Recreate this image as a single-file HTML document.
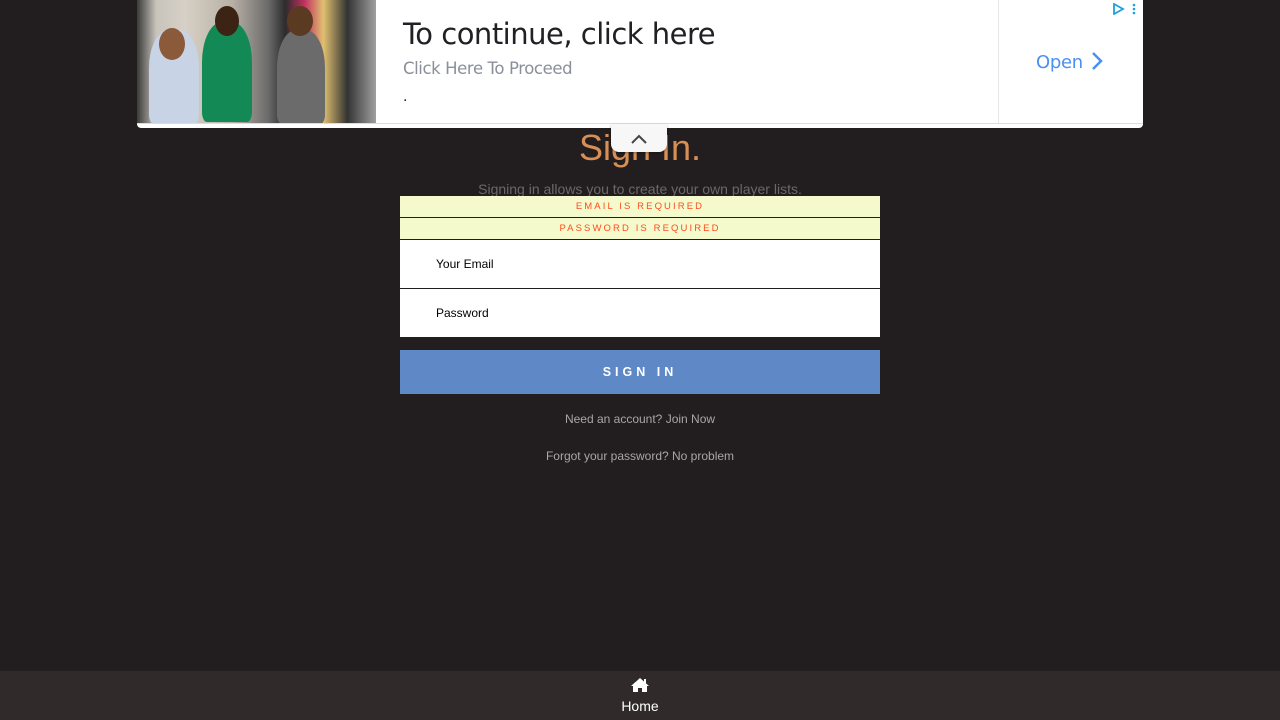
<!DOCTYPE html>
<html><head><meta charset="utf-8"><style>
*{margin:0;padding:0;box-sizing:border-box}
body{width:1280px;height:720px;background:#221e1f;font-family:"Liberation Sans",Arial,sans-serif;position:relative;overflow:hidden}
.ad{position:absolute;left:137px;top:0;width:1006px;height:128px;background:#fff;border-radius:0 0 4px 4px;border-bottom:4px solid #fff}
.ad .line{position:absolute;left:0;right:0;top:123px;height:1px;background:#ddd}
.img{position:absolute;left:0;top:0;width:239px;height:124px;background:linear-gradient(90deg,#3a3a3a 0,#c8c3bb 8%,#d6d0c6 20%,#b8b0a5 40%,#6a6a6a 55%,#2c2c2c 62%,#c23060 70%,#e0c070 78%,#333 88%,#a0a0a0 100%)}
.p{position:absolute;border-radius:40% 40% 10% 10%}
.t1{position:absolute;left:266px;top:17px;font-size:29px;color:#202124;font-family:"DejaVu Sans","Liberation Sans",sans-serif;letter-spacing:-0.5px}
.t2{position:absolute;left:266px;top:59px;font-size:16.5px;color:#8a8f9a;font-family:"DejaVu Sans",sans-serif;letter-spacing:-0.4px}
.t3{position:absolute;left:266px;top:88px;font-size:16px;color:#222}
.sep{position:absolute;left:861px;top:0;width:1px;height:123px;background:#e6e6e6}
.open{position:absolute;left:899px;top:51px;font-size:18px;color:#4a8ff5;font-family:"DejaVu Sans",sans-serif;letter-spacing:-0.3px}
.tab{position:absolute;left:611px;top:124px;width:56px;height:28px;background:#f7f7f7;border-radius:0 0 8px 8px;box-shadow:0 1px 2px rgba(0,0,0,.3)}
h1{position:absolute;left:0;width:1280px;top:127px;text-align:center;font-weight:normal;font-size:36px;color:#d98f54}
.sub{position:absolute;top:181px;width:1280px;text-align:center;font-size:14px;color:#6c6869}
.err{position:absolute;left:400px;width:480px;height:21px;background:#f5facc;color:#ff4b1f;font-size:9.5px;letter-spacing:2.1px;text-align:center;line-height:21px}
.inp{position:absolute;left:400px;width:480px;height:48px;background:#fff;font-size:12px;color:#000;padding-left:36px;line-height:48px}
.btn{position:absolute;left:400px;top:350px;width:480px;height:44px;background:#5f88c6;color:#fff;font-size:12.5px;font-weight:bold;letter-spacing:4px;text-align:center;line-height:44px}
.lnk{position:absolute;width:1280px;text-align:center;font-size:12px;color:#aaa5a6}
.foot{position:absolute;left:0;top:671px;width:1280px;height:49px;background:#302a2b;text-align:center;color:#fff;font-size:14px}
</style></head><body>
<h1>Sign In.</h1>
<div class="ad">
 <div class="img">
  <div class="p" style="left:12px;top:30px;width:50px;height:94px;background:#c9d3e6"></div>
  <div class="p" style="left:65px;top:22px;width:50px;height:100px;background:#138a55"></div>
  <div class="p" style="left:78px;top:6px;width:24px;height:30px;background:#3b2414;border-radius:50%"></div>
  <div class="p" style="left:22px;top:28px;width:26px;height:32px;background:#8a5a3a;border-radius:50%"></div>
  <div class="p" style="left:140px;top:30px;width:48px;height:94px;background:#6b6b6b"></div>
  <div class="p" style="left:150px;top:6px;width:26px;height:30px;background:#5b3a22;border-radius:50%"></div>
 </div>
 <div class="line"></div>
 <div class="t1">To continue, click here</div>
 <div class="t2">Click Here To Proceed</div>
 <div class="t3">.</div>
 <div class="sep"></div>
 <div class="open">Open <svg width="14" height="20" viewBox="0 0 14 20" style="vertical-align:-3px;margin-left:2px"><path d="M3 2 L11 10 L3 18" stroke="#4a8ff5" stroke-width="2.5" fill="none"/></svg></div>
 <svg style="position:absolute;left:976px;top:3px" width="26" height="12" viewBox="0 0 26 12"><path d="M1 1 L10 6 L1 11Z" fill="none" stroke="#1aa3d6" stroke-width="1.8"/><circle cx="21" cy="2" r="1.3" fill="#1aa3d6"/><circle cx="21" cy="6" r="1.3" fill="#1aa3d6"/><circle cx="21" cy="10" r="1.3" fill="#1aa3d6"/></svg>
</div>
<div class="tab"><svg width="56" height="24" viewBox="0 0 56 24"><path d="M21 19 L28 12 L35 19" stroke="#444" stroke-width="2" fill="none"/></svg></div>
<div class="sub">Signing in allows you to create your own player lists.</div>
<div class="err" style="top:196px">EMAIL IS REQUIRED</div>
<div class="err" style="top:218px">PASSWORD IS REQUIRED</div>
<div class="inp" style="top:240px">Your Email</div>
<div class="inp" style="top:289px">Password</div>
<div class="btn">SIGN IN</div>
<div class="lnk" style="top:412px">Need an account? Join Now</div>
<div class="lnk" style="top:449px">Forgot your password? No problem</div>
<div class="foot"><svg width="20" height="16" viewBox="0 0 20 16" style="margin-top:6px;display:block;margin-left:630px"><path d="M10 1 L1 9 L3 9 L3 15 L8 15 L8 11 L12 11 L12 15 L17 15 L17 9 L19 9 Z" fill="#fff"/><rect x="14" y="2" width="2" height="4" fill="#fff"/></svg><div style="margin-top:5px">Home</div></div>
</body></html>
